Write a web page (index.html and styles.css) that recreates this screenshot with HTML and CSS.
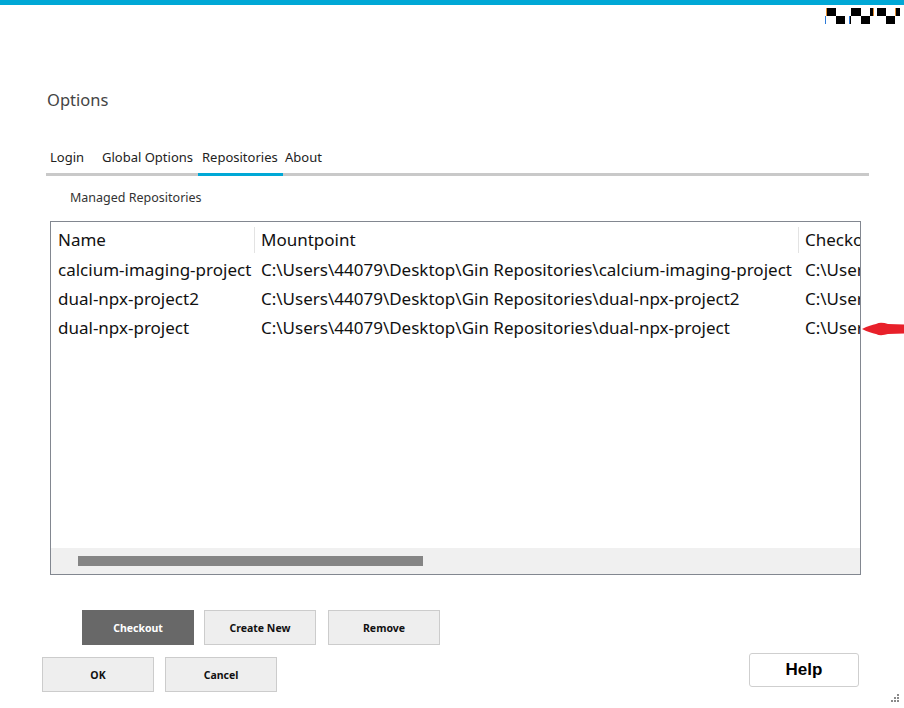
FILE: index.html
```html
<!DOCTYPE html>
<html>
<head>
<meta charset="utf-8">
<link rel="stylesheet" href="styles.css">
</head>
<body>
<div class="window">
  <div class="topbar"></div>
  <div class="titlebar">
    <svg class="checker" width="76" height="17" viewBox="0 0 76 17">
      <rect x="2" y="0" width="9" height="8" fill="#000"/>
      <rect x="26" y="0" width="10" height="8" fill="#000"/>
      <rect x="45" y="0" width="3" height="8" fill="#000"/>
      <rect x="52" y="0" width="9" height="8" fill="#000"/>
      <rect x="71" y="0" width="4" height="8" fill="#000"/>
      <rect x="11" y="8" width="9" height="8" fill="#000"/>
      <rect x="25" y="8" width="1" height="8" fill="#000"/>
      <rect x="36" y="8" width="9" height="8" fill="#000"/>
      <rect x="61" y="8" width="9" height="8" fill="#000"/>
      <rect x="1" y="0" width="1" height="8" fill="#e08a2c"/>
      <rect x="0" y="8" width="1" height="8" fill="#2c7ad8"/>
      <rect x="24" y="8" width="1" height="8" fill="#2c7ad8"/>
      <rect x="48" y="0" width="1" height="8" fill="#e08a2c"/>
      <rect x="70" y="0" width="1" height="8" fill="#e08a2c"/>
    </svg>
  </div>
  <h1 class="title">Options</h1>
  <nav class="tabs">
    <span class="tab t-login">Login</span>
    <span class="tab t-global">Global Options</span>
    <span class="tab t-repos active">Repositories</span>
    <span class="tab t-about">About</span>
  </nav>
  <div class="section-label">Managed Repositories</div>
  <div class="grid-wrap">
    <div class="grid">
      <div class="grid-body">
        <div class="row head">
          <div class="cell c1">Name</div>
          <div class="cell c2">Mountpoint</div>
          <div class="cell c3">Checkout</div>
        </div>
        <div class="row">
          <div class="cell c1">calcium-imaging-project</div>
          <div class="cell c2">C:\Users\44079\Desktop\Gin Repositories\calcium-imaging-project</div>
          <div class="cell c3">C:\Users\44079\Desktop</div>
        </div>
        <div class="row">
          <div class="cell c1">dual-npx-project2</div>
          <div class="cell c2">C:\Users\44079\Desktop\Gin Repositories\dual-npx-project2</div>
          <div class="cell c3">C:\Users\44079\Desktop</div>
        </div>
        <div class="row">
          <div class="cell c1">dual-npx-project</div>
          <div class="cell c2">C:\Users\44079\Desktop\Gin Repositories\dual-npx-project</div>
          <div class="cell c3">C:\Users\44079\Desktop</div>
        </div>
      </div>
      <div class="hscroll"><div class="thumb"></div></div>
    </div>
    <svg class="arrow" width="42" height="14" viewBox="0 0 42 14">
      <path d="M0 7 C6 4 10 3 14 2 C18 0 22 1 26 2 L42 2.5 L42 11.5 L26 12 C22 13 18 14 14 12 C10 11 6 10 0 7 Z" fill="#e8202a"/>
    </svg>
  </div>
  <div class="actions">
    <button class="btn dark">Checkout</button>
    <button class="btn">Create New</button>
    <button class="btn remove">Remove</button>
  </div>
  <div class="footer">
    <div class="footer-left">
      <button class="btn">OK</button>
      <button class="btn">Cancel</button>
    </div>
    <button class="help">Help</button>
  </div>
  <svg class="grip" width="12" height="12" viewBox="0 0 12 12">
    <rect x="9" y="1" width="2" height="2" fill="#8a8a8a"/>
    <rect x="6" y="4" width="2" height="2" fill="#8a8a8a"/>
    <rect x="9" y="4" width="2" height="2" fill="#8a8a8a"/>
    <rect x="3" y="7" width="2" height="2" fill="#8a8a8a"/>
    <rect x="6" y="7" width="2" height="2" fill="#8a8a8a"/>
    <rect x="9" y="7" width="2" height="2" fill="#8a8a8a"/>
  </svg>
</div>
</body>
</html>
```

FILE: styles.css
```css
* { box-sizing: border-box; }
html, body { margin: 0; padding: 0; background: #fff; }
body { width: 904px; height: 708px; overflow: hidden; font-family: "Noto Sans", "Open Sans", sans-serif; color: #1a1a1a; }
.window { position: relative; width: 904px; height: 708px; }
.topbar { height: 5px; background: #00a8d6; }
.titlebar { height: 20px; display: flex; justify-content: flex-end; padding-top: 3px; padding-right: 3px; }
.checker { display: block; }
.title { margin: 63px 0 0 47px; font-size: 16.5px; font-weight: 400; color: #444; line-height: 24px; height: 24px; }
.tabs { display: flex; margin: 33px 35px 0 46px; border-bottom: 3px solid #c9c9c9; height: 31px; align-items: flex-end; }
.tab { font-size: 13px; color: #222; padding: 0 0 6px 4px; line-height: 19px; margin-bottom: -3px; border-bottom: 3px solid transparent; white-space: nowrap; }
.t-login { width: 52px; }
.t-global { width: 100px; }
.t-repos { width: 85px; }
.t-about { padding-left: 2px; }
.tab.active { border-bottom-color: #00a8d6; }
.section-label { margin: 12px 0 0 70px; font-size: 12.5px; color: #333; line-height: 20px; height: 20px; }
.grid-wrap { position: relative; margin: 13px 0 0 50px; width: 854px; height: 354px; }
.grid { width: 811px; height: 354px; border: 1px solid #828790; display: flex; flex-direction: column; overflow: hidden; }
.grid-body { flex: 1; overflow: hidden; }
.row { display: flex; height: 29px; align-items: center; font-size: 17px; color: #111; white-space: nowrap; }
.row.head { height: 33px; padding-top: 2px; }
.cell { overflow: hidden; padding-left: 7px; flex: none; }
.c1 { width: 203px; }
.c2 { width: 544px; }
.c3 { width: 62px; }
.head .c2, .head .c3 { border-left: 1px solid #e3e3e3; padding-left: 6px; height: 26px; line-height: 26px; }
.head .c1 { height: 26px; line-height: 26px; }
.hscroll { height: 26px; background: #f0f0f0; padding: 8px 0 0 27px; flex: none; }
.thumb { width: 345px; height: 10px; background: #858585; }
.arrow { position: absolute; left: 812px; top: 101px; }
.actions { display: flex; gap: 10px; margin: 35px 0 0 82px; }
.btn { width: 112px; height: 35px; border: 1px solid #cccccc; background: #eeeeee; font-family: "Noto Sans", sans-serif; font-weight: 700; font-size: 10.5px; color: #111; padding: 0; }
.actions .remove { margin-left: 2px; }
.btn.dark { background: #686868; border-color: #686868; color: #fff; }
.footer { display: flex; justify-content: space-between; align-items: flex-start; margin: 11px 45px 0 42px; }
.footer-left { display: flex; gap: 11px; margin-top: 1px; }
.help { width: 110px; height: 34px; margin-top: -3px; background: #fff; border: 1px solid #cfcfcf; border-radius: 3px; font-family: "Liberation Sans", Arial, sans-serif; font-weight: 700; font-size: 17px; color: #000; padding: 0; }
.grip { position: absolute; right: 4px; bottom: 3px; }
```
